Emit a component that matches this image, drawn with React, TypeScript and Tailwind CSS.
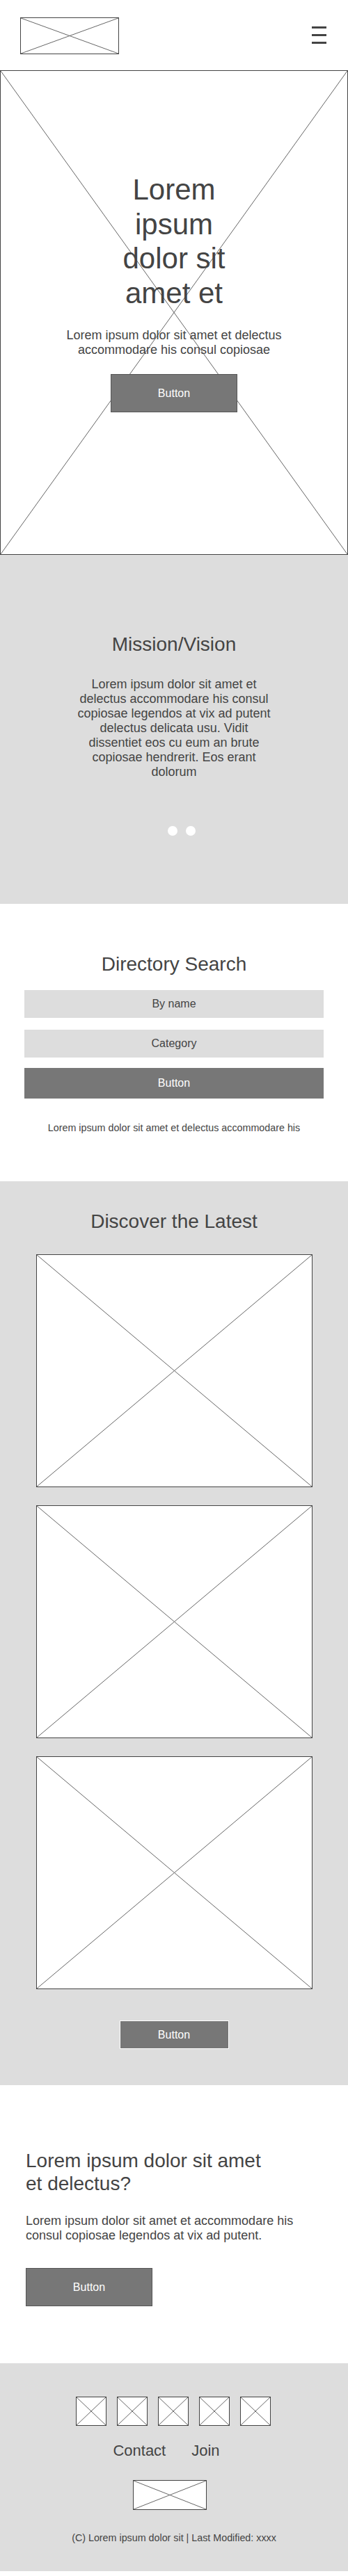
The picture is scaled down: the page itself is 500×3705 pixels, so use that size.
import React from 'react'

const font = { fontFamily: '"Liberation Sans", Arial, sans-serif' }

const Placeholder = ({ className }: { className: string }) => (
    <div className={`relative border border-[#444] bg-white ${className}`}>
        <svg className="absolute inset-0 w-full h-full" viewBox="0 0 100 100" preserveAspectRatio="none">
            <line x1="0" y1="0" x2="100" y2="100" stroke="#666" strokeWidth="1" vectorEffect="non-scaling-stroke" />
            <line x1="100" y1="0" x2="0" y2="100" stroke="#666" strokeWidth="1" vectorEffect="non-scaling-stroke" />
        </svg>
    </div>
)

const App = () => {
    return (
        <div style={font} className="w-[500px] bg-white text-[#444]">
            {/* header */}
            <header className="h-[101px] flex items-start justify-between pl-[29px] pr-[31px] pt-[25px]">
                <Placeholder className="w-[142px] h-[53px]" />
                <div className="mt-[13px] flex flex-col gap-[8px]">
                    <span className="block w-[21px] h-[3px] bg-[#444]"></span>
                    <span className="block w-[21px] h-[3px] bg-[#444]"></span>
                    <span className="block w-[21px] h-[3px] bg-[#444]"></span>
                </div>
            </header>

            {/* hero */}
            <section className="relative h-[697px] border border-[#444] flex flex-col items-center pt-[146px]">
                <svg className="absolute inset-0 w-full h-full" viewBox="0 0 100 100" preserveAspectRatio="none">
                    <line x1="0" y1="0" x2="100" y2="100" stroke="#666" strokeWidth="1" vectorEffect="non-scaling-stroke" />
                    <line x1="100" y1="0" x2="0" y2="100" stroke="#666" strokeWidth="1" vectorEffect="non-scaling-stroke" />
                </svg>
                <h1 className="relative w-[180px] text-center text-[42px] leading-[49.5px]">Lorem ipsum dolor sit amet et</h1>
                <p className="relative mt-[26px] w-[340px] text-center text-[18px] leading-[21px]">
                    Lorem ipsum dolor sit amet et delectus accommodare his consul copiosae
                </p>
                <button className="relative mt-[24px] w-[182px] h-[55px] bg-[#777] border border-[#555] text-white text-[16px]">Button</button>
            </section>

            {/* mission */}
            <section className="bg-[#ddd] h-[502px] flex flex-col items-center pt-[113px]">
                <h2 className="text-[28px] leading-[32px]">Mission/Vision</h2>
                <p className="mt-[31px] w-[290px] text-center text-[18px] leading-[21px]">
                    Lorem ipsum dolor sit amet et delectus accommodare his consul copiosae legendos at vix ad putent delectus delicata usu. Vidit dissentiet eos cu eum an brute copiosae hendrerit. Eos erant dolorum
                </p>
                <div className="mt-[67px] flex gap-[12px] pl-[22px]">
                    <span className="w-[14px] h-[14px] rounded-full bg-white"></span>
                    <span className="w-[14px] h-[14px] rounded-full bg-white"></span>
                </div>
            </section>

            {/* directory search */}
            <section className="h-[399px] flex flex-col items-center pt-[71px] px-[35px]">
                <h2 className="text-[28px] leading-[32px]">Directory Search</h2>
                <div className="mt-[21px] w-full flex flex-col gap-[17px]">
                    <div className="h-[40px] bg-[#ddd] flex items-center justify-center text-[16px]">By name</div>
                    <div className="h-[40px] bg-[#ddd] flex items-center justify-center text-[16px]">Category</div>
                </div>
                <button className="mt-[15px] w-full h-[44px] bg-[#777] text-white text-[16px]">Button</button>
                <p className="mt-[32px] text-[14.3px] leading-[20px]">Lorem ipsum dolor sit amet et delectus accommodare his</p>
            </section>

            {/* discover */}
            <section className="bg-[#ddd] h-[1300px] flex flex-col items-center pt-[42px]">
                <h2 className="text-[28px] leading-[32px]">Discover the Latest</h2>
                <div className="mt-[31px] flex flex-col gap-[26px]">
                    <Placeholder className="w-[397px] h-[335px]" />
                    <Placeholder className="w-[397px] h-[335px]" />
                    <Placeholder className="w-[397px] h-[335px]" />
                </div>
                <button className="mt-[45px] w-[157px] h-[41px] bg-[#777] border border-white text-white text-[16px]">Button</button>
            </section>

            {/* call to action */}
            <section className="h-[400px] pt-[92px] px-[37px]">
                <h2 className="w-[360px] text-[28px] leading-[33px]">Lorem ipsum dolor sit amet et delectus?</h2>
                <p className="mt-[27px] text-[18px] leading-[21px]">
                    Lorem ipsum dolor sit amet et accommodare his consul copiosae legendos at vix ad putent.
                </p>
                <button className="mt-[36px] w-[182px] h-[55px] bg-[#777] border border-[#555] text-white text-[16px]">Button</button>
            </section>

            {/* footer */}
            <footer className="bg-[#ddd] h-[299px] flex flex-col items-center pt-[48px]">
                <div className="flex gap-[15px] pr-[2px]">
                    <Placeholder className="w-[44px] h-[42px]" />
                    <Placeholder className="w-[44px] h-[42px]" />
                    <Placeholder className="w-[44px] h-[42px]" />
                    <Placeholder className="w-[44px] h-[42px]" />
                    <Placeholder className="w-[44px] h-[42px]" />
                </div>
                <nav className="mt-[23px] flex gap-[37px] text-[22px] leading-[26px] pr-[22px]">
                    <a>Contact</a>
                    <a>Join</a>
                </nav>
                <Placeholder className="mt-[29px] mr-[13px] w-[106px] h-[43px]" />
                <p className="mt-[30px] text-[14.3px] leading-[20px]">(C) Lorem ipsum dolor sit | Last Modified: xxxx</p>
            </footer>
            <div className="h-[8px]"></div>
        </div>
    )
}

export default App
